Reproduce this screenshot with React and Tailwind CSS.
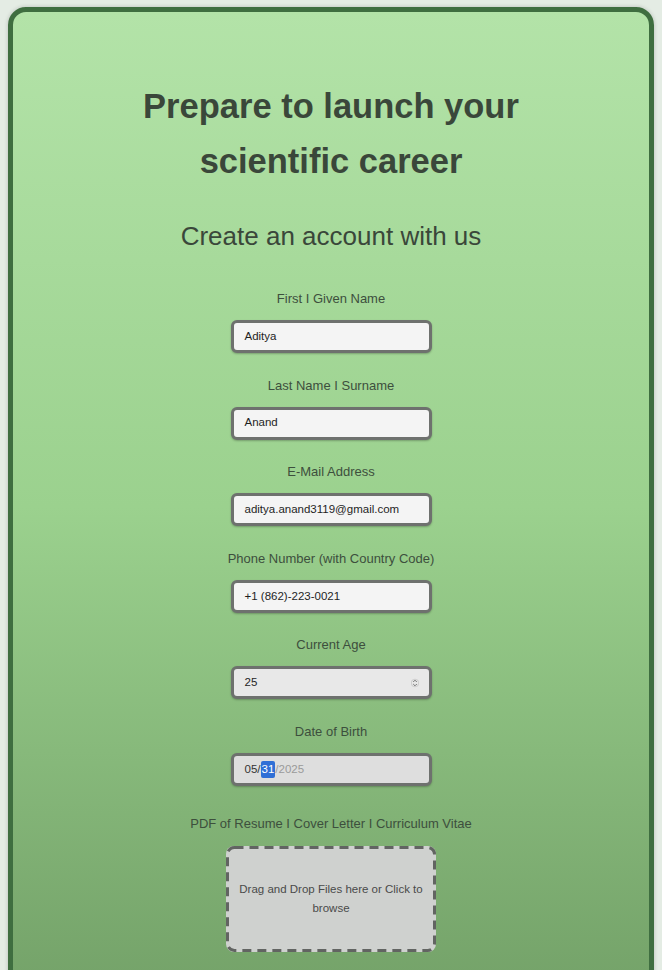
import React from "react";

const F = { fontFamily: '"Liberation Sans", Arial, sans-serif' };

function Field({ label, children }) {
  return (
    <div className="flex flex-col items-center">
      <div className="text-[13px] leading-[16px] text-[#3d4f3d] h-[16px]">{label}</div>
      <div className="mt-[13px]">{children}</div>
    </div>
  );
}

function Box({ children, bg = "bg-[#f4f4f4]" }) {
  return (
    <div className={`w-[201px] h-[33px] rounded-[6px] border-[3px] border-[#6e716e] ${bg} flex items-center pl-[11px] pr-[10px] text-[11.5px] text-[#1f1f1f] shadow-[0_1px_2px_rgba(0,0,0,0.25)]`}>
      {children}
    </div>
  );
}

export default function App() {
  return (
    <div style={F} className="w-[662px] h-[970px] overflow-hidden bg-[#e4ece4] pt-[7px] px-[8px]">
      <div className="h-[1000px] rounded-[18px] border-[5px] border-[#3f6e40] bg-gradient-to-b from-[#b3e3a8] via-[#9bd18e] to-[#73a168] flex flex-col items-center shadow-[0_0_4px_rgba(0,0,0,0.2)]">
        <h1 className="mt-[67px] text-[34.5px] leading-[55px] font-bold text-[#3a473a] text-center w-[440px]">
          Prepare to launch your scientific career
        </h1>
        <div className="mt-[32px] text-[26px] leading-[30px] text-[#3a473a]">Create an account with us</div>
        <div className="mt-[40px] flex flex-col gap-[24.6px]">
          <Field label="First I Given Name"><Box>Aditya</Box></Field>
          <Field label="Last Name I Surname"><Box>Anand</Box></Field>
          <Field label="E-Mail Address"><Box>aditya.anand3119@gmail.com</Box></Field>
          <Field label="Phone Number (with Country Code)"><Box>+1 (862)-223-0021</Box></Field>
          <Field label="Current Age">
            <Box bg="bg-[#e8e8e8]">
              <span className="flex-1">25</span>
              <svg width="8" height="12" viewBox="0 0 8 12">
                <circle cx="4" cy="6" r="3.8" fill="none" stroke="#bbb" strokeWidth="0.6" />
                <path d="M2.2 5 L4 3.2 L5.8 5 M2.2 7 L4 8.8 L5.8 7" fill="none" stroke="#666" strokeWidth="0.9" />
              </svg>
            </Box>
          </Field>
          <Field label="Date of Birth">
            <Box bg="bg-[#dedede]">
              <span className="text-[#333]">05/</span>
              <span className="bg-[#2f6fd6] text-white rounded-[2px] px-[1px]">31</span>
              <span className="text-[#9a9a9a]">/2025</span>
            </Box>
          </Field>
        </div>
        <div className="mt-[30px] text-[13px] leading-[16px] text-[#3d4f3d]">PDF of Resume I Cover Letter I Curriculum Vitae</div>
        <div className="relative mt-[14px] w-[210px] h-[106px] rounded-[8px] bg-[#cfd1cf] flex items-center justify-center text-center px-[10px] text-[11.5px] leading-[19px] text-[#4a4a4a]">
          <svg className="absolute inset-0 pointer-events-none" width="210" height="106" viewBox="0 0 210 106">
            <rect x="1.5" y="1.5" width="207" height="103" rx="7" ry="7" fill="none" stroke="#626462" strokeWidth="3" strokeDasharray="9 6" />
          </svg>
          <span className="relative">Drag and Drop Files here or Click to browse</span>
        </div>
      </div>
    </div>
  );
}
